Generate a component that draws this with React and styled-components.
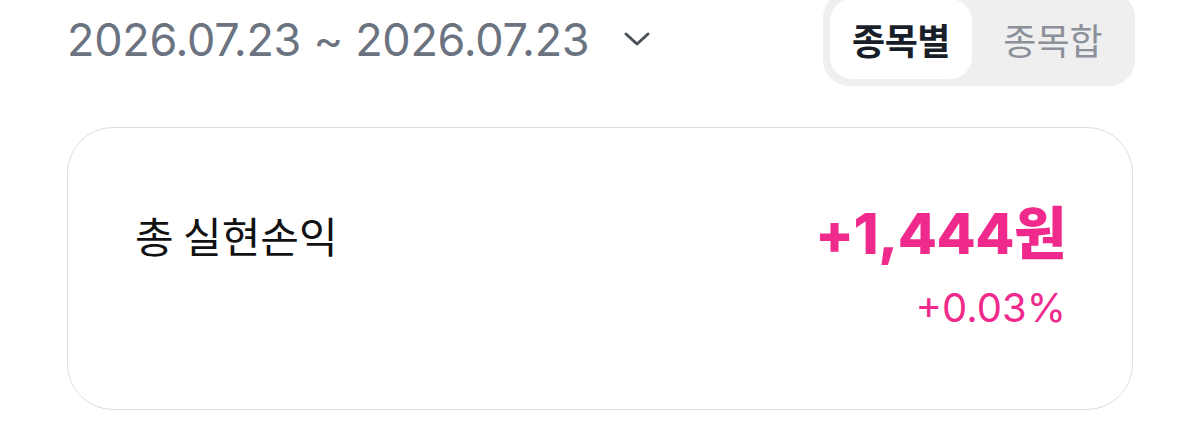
import React, { useState } from 'react';
import styled, { createGlobalStyle } from 'styled-components';

const GlobalStyle = createGlobalStyle`
  html, body {
    margin: 0;
    padding: 0;
    background: #ffffff;
    font-family: Inter, "Noto Sans CJK KR", sans-serif;
  }
`;

const Page = styled.div`
  padding: 0 67px;
  overflow: hidden;
  height: 439px;
  box-sizing: border-box;
`;

const Header = styled.div`
  display: flex;
  align-items: center;
  justify-content: space-between;
  margin-top: -8px;
`;

const DateRange = styled.button`
  display: flex;
  align-items: center;
  gap: 34px;
  border: 0;
  padding: 0;
  background: none;
  color: #6b7280;
  font-family: Inter, "Noto Sans CJK KR", sans-serif;
  font-size: 45px;
  letter-spacing: -0.3px;
  cursor: pointer;
`;

const Segment = styled.div`
  display: flex;
  padding: 7px;
  width: 312px;
  height: 94px;
  box-sizing: border-box;
  border-radius: 26px;
  background: #efeff0;
  margin-right: -2px;
`;

const SegmentItem = styled.button`
  flex: ${p => (p.active ? '0 0 142px' : '1')};
  border: 0;
  border-radius: 22px;
  background: ${p => (p.active ? '#ffffff' : 'transparent')};
  color: ${p => (p.active ? '#191f28' : '#8b9099')};
  font-family: "Noto Sans CJK KR", sans-serif;
  font-weight: ${p => (p.active ? 700 : 400)};
  font-size: 36px;
  letter-spacing: ${p => (p.active ? '-0.5px' : '0')};
  padding: ${p => (p.active ? '0' : '0 0 0 6px')};
  cursor: pointer;
`;

const Card = styled.div`
  margin-top: 41px;
  height: 283px;
  box-sizing: border-box;
  border: 1.5px solid #dedede;
  border-radius: 46px;
  padding: 72px 66px 0 67px;
  display: flex;
  justify-content: space-between;
  align-items: flex-start;
`;

const Label = styled.div`
  font-family: "Noto Sans CJK KR", sans-serif;
  font-size: 42px;
  color: #111111;
  padding-top: 4px;
`;

const Figures = styled.div`
  display: flex;
  flex-direction: column;
  align-items: flex-end;
  color: #ef2a8c;
`;

const Amount = styled.div`
  font-family: Inter, "Noto Sans CJK KR", sans-serif;
  font-weight: 800;
  font-size: 57px;
  line-height: 1.2;
  letter-spacing: -0.5px;
`;

const Rate = styled.div`
  font-family: Inter, sans-serif;
  font-size: 40px;
  line-height: 1.2;
  margin-top: 16px;
`;

const Chevron = () => (
  <svg width="28" height="18" viewBox="0 0 28 18" fill="none">
    <path d="M3 4l11 10L25 4" stroke="#4b5058" strokeWidth="3" strokeLinecap="round" strokeLinejoin="round" />
  </svg>
);

export default function App() {
  const [mode, setMode] = useState('each');
  return (
    <Page>
      <GlobalStyle />
      <Header>
        <DateRange>
          <span>2026.07.23 ~ 2026.07.23</span>
          <Chevron />
        </DateRange>
        <Segment>
          <SegmentItem active={mode === 'each'} onClick={() => setMode('each')}>종목별</SegmentItem>
          <SegmentItem active={mode === 'sum'} onClick={() => setMode('sum')}>종목합</SegmentItem>
        </Segment>
      </Header>
      <Card>
        <Label>총 실현손익</Label>
        <Figures>
          <Amount>+1,444원</Amount>
          <Rate>+0.03%</Rate>
        </Figures>
      </Card>
    </Page>
  );
}
